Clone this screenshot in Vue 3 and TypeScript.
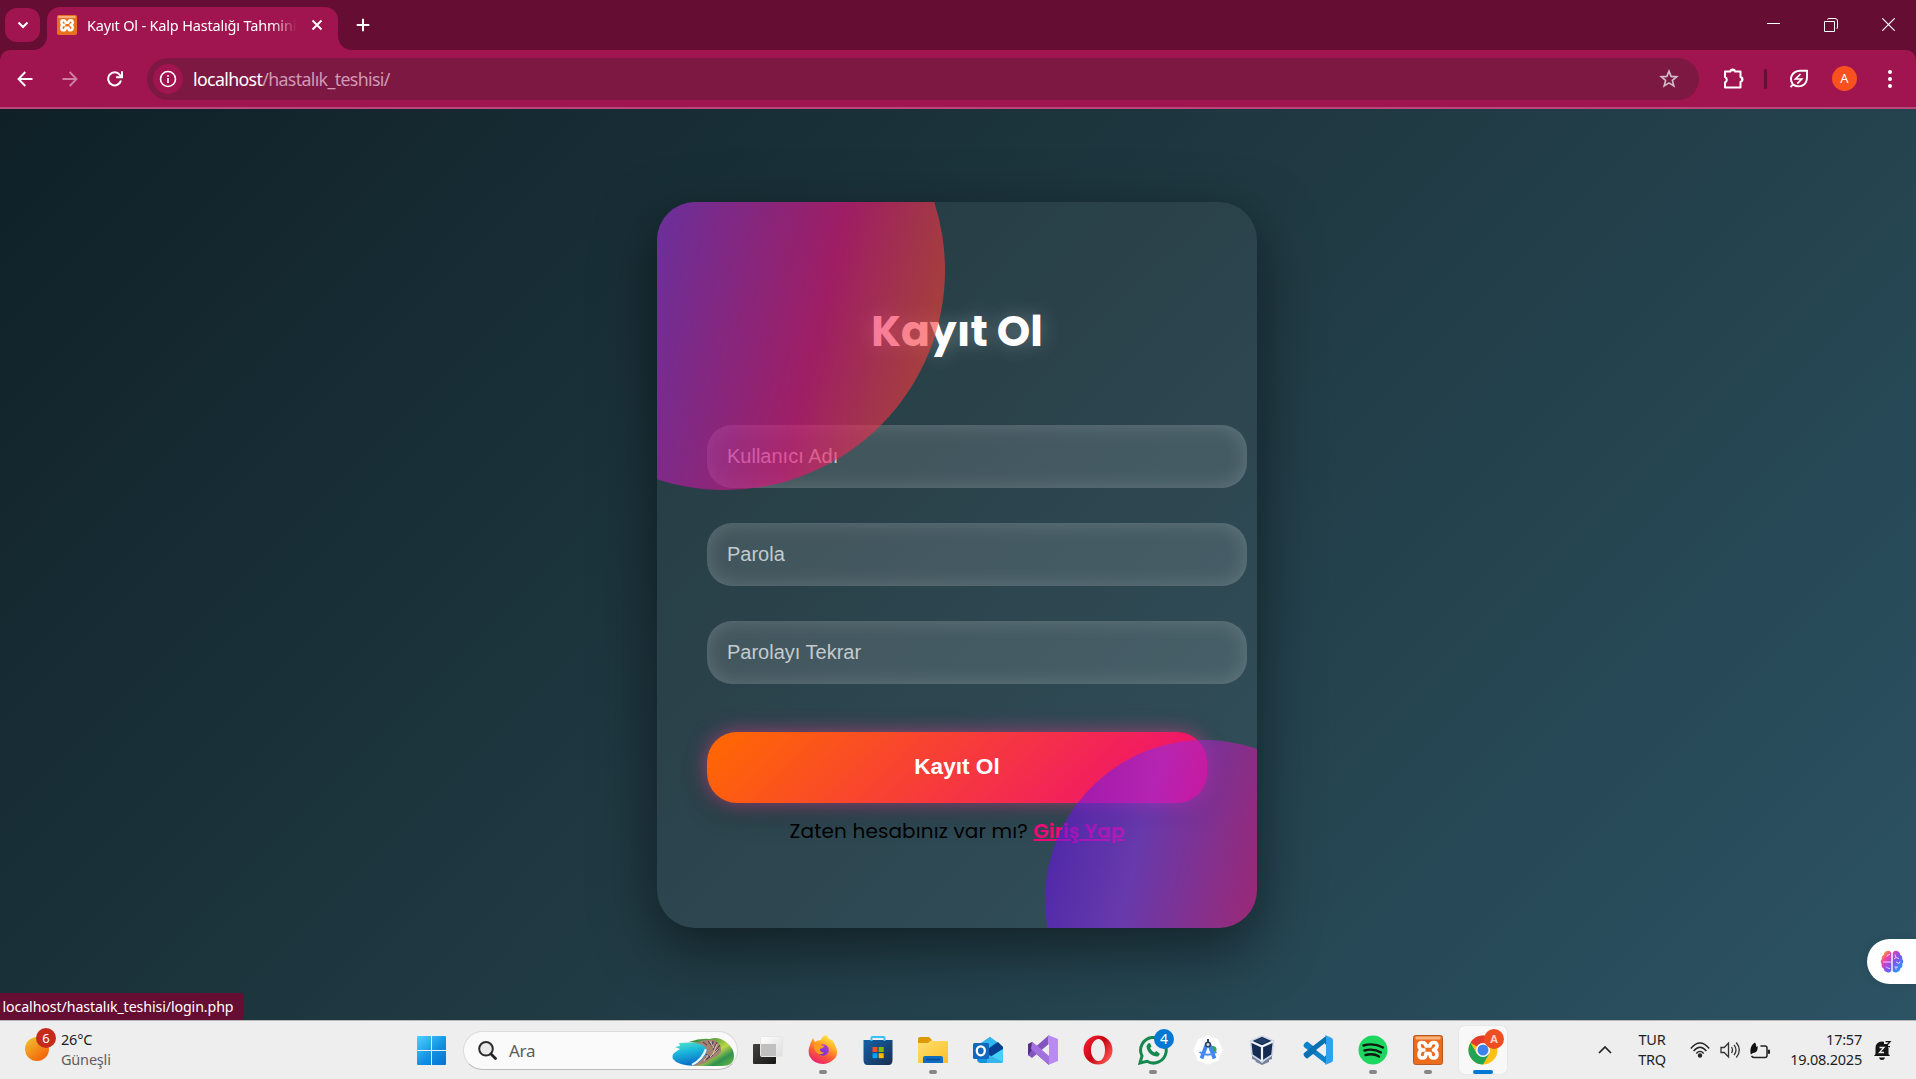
<script setup lang="ts">
const fields: string[] = ['Kullanıcı Adı', 'Parola', 'Parolayı Tekrar']
const steps = [0, 45, 90, 135, 180, 225, 270, 315]
</script>

<template>
  <div class="screen">
    <header class="tabs">
      <div class="tab-search">
        <svg width="12" height="8" viewBox="0 0 12 8"><path d="M1.5 1.5 6 6l4.500-4.500" fill="none" stroke="#fff" stroke-width="2" /></svg>
      </div>
      <div class="tab">
        <svg class="foot left" width="14" height="14"><path d="M14 0V14H0A14 14 0 0 0 14 0Z" fill="#a0154f" /></svg>
        <svg width="20" height="20" viewBox="0 0 30 30">
          <rect width="30" height="30" rx="2.500" fill="#e9701f" /><rect x="2" y="1.500" width="26" height="3" rx="1" fill="#f6b07c" />
          <path d="M9.500 15q-3-1-3-4t3-3q3 0 3.500 3.500h4q.5-3.500 3.500-3.500 3 0 3 3T20.500 15q3 1 3 4t-3 4q-3.500 0-3.500-4h-4q0 4-3.500 4-3 0-3-4t3-4h3" fill="none" stroke="#fff" stroke-width="3.800" stroke-linejoin="round" />
        </svg>
        <span class="tab-title">Kayıt Ol - Kalp Hastalığı Tahmini</span>
        <svg class="tab-x" width="12" height="12"><path d="m1.500 1.500 9 9m0-9-9 9" stroke="#fff" stroke-width="1.900" /></svg>
        <svg class="foot right" width="14" height="14"><path d="M0 0V14H14A14 14 0 0 1 0 0Z" fill="#a0154f" /></svg>
      </div>
      <svg class="plus" width="14" height="14"><path d="M7 .7v12.600M.7 7h12.600" stroke="#fff" stroke-width="2" /></svg>
      <div class="win">
        <svg width="13" height="13"><path d="M0 5.500h13" stroke="#fff" /></svg>
        <svg width="14" height="14" fill="none" stroke="#fff"><path d="M.5 3.500h10v10H.5zM3.500 1.500q0-1 1.500-1h6q2.500 0 2.500 2.500v6q0 1.500-1 2" /></svg>
        <svg width="13" height="13"><path d="m.3.300 12.400 12.400m0-12.400L.3 12.700" stroke="#fff" stroke-width="1.200" /></svg>
      </div>
    </header>

    <div class="toolbar-wrap">
      <div class="toolbar">
        <div class="nav">
          <svg width="16" height="16" fill="none" stroke="#fff" stroke-width="1.900"><path d="M15.500 8H2M8.300 1 1.500 8l6.800 7" /></svg>
          <svg width="16" height="16" fill="none" stroke="#cf7fa3" stroke-width="1.900"><path d="M.5 8H14M7.700 1l6.800 7-6.800 7" /></svg>
          <svg width="16" height="16" fill="none" stroke="#fff" stroke-width="2"><path d="M14 9.500A6.500 6.500 0 1 1 12.800 3.800L14.500 5.800M9 6.200h6V.300" /></svg>
        </div>
        <div class="omni">
          <div class="info">
            <svg width="18" height="18"><circle cx="9" cy="9" r="7.500" fill="none" stroke="#fff" stroke-width="1.600" /><path d="M9 8v5M9 5v1.800" stroke="#fff" stroke-width="1.600" /></svg>
          </div>
          <span class="url"><b>localhost</b>/hastalık_teshisi/</span>
          <svg class="star" width="20" height="20" viewBox="0 0 20 20"><path d="m10 2.200 2.100 5.200 5.600.4-4.300 3.600 1.400 5.500L10 13.900l-4.800 3 1.400-5.500-4.300-3.600 5.600-.4Z" fill="none" stroke="#d2bbc7" stroke-width="1.700" /></svg>
        </div>
        <svg class="puzzle" width="22" height="22" viewBox="0 0 22 22"><path d="M2 3.500h5.500a2.200 2 0 0 1 4.400 0h5.600v5.800a2 2.200 0 0 1 0 4.400v5.800H2v-5a3 3 0 0 0 0-5.500Z" fill="none" stroke="#fff" stroke-width="2" stroke-linejoin="round" /><path d="M7.500 3.200a2.200 2 0 0 1 4.400 0M18 9.300a2 2.200 0 0 1 0 4.400" fill="#fff" /></svg>
        <i class="divider"></i>
        <svg class="leaf" width="20" height="20" viewBox="0 0 20 20" fill="none" stroke="#fff" stroke-width="1.900"><path d="M1.500 18 4 15.600M4 15.600C-.5 9.500 3 2 11 1.700h7v6.500C18 16 11 19.800 4 15.600Z" /><path d="M11.500 5 6.500 10h6.200l-4.400 4.700" stroke-width="1.700" /></svg>
        <div class="avatar">A</div>
        <svg class="dots" width="4" height="18" fill="#fff"><circle cx="2" cy="2" r="2" /><circle cx="2" cy="9" r="2" /><circle cx="2" cy="16" r="2" /></svg>
      </div>
    </div>

    <main class="page">
      <section class="card">
        <h1>Kayıt Ol</h1>
        <form @submit.prevent>
          <input v-for="f in fields" :key="f" type="text" :placeholder="f" />
          <button type="submit">Kayıt Ol</button>
        </form>
        <p><span>Zaten hesabınız var mı?</span> <a href="#">Giriş Yap</a></p>
        <i class="orb one"></i>
        <i class="orb two"></i>
      </section>
      <div class="status">localhost/hastalık_teshisi/login.php</div>
      <div class="brain">
        <svg width="24" height="24" viewBox="0 0 24 24">
          <defs><linearGradient id="br" gradientUnits="userSpaceOnUse" x1="2" y1="2" x2="22" y2="20"><stop offset=".05" stop-color="#ffa11d" /><stop offset=".28" stop-color="#ed3fb0" /><stop offset=".58" stop-color="#7d52f2" /><stop offset="1" stop-color="#1da5ff" /></linearGradient></defs>
          <path d="M11.300 3v18q-2 2.500-4.700 1-2.600-.5-3-3.500-2.800-1.500-1.800-4.500-2.200-2.500 0-5-.6-3.200 2-4.300Q4.500 1 7.200 1q2.800-1 4.100 2ZM12.700 3v18q2 2.500 4.700 1 2.600-.5 3-3.500 2.800-1.500 1.800-4.500 2.200-2.500 0-5 .6-3.200-2-4.300Q19.500 1 16.800 1q-2.800-1-4.100 2Z" fill="url(#br)" />
          <path d="M3 12h8M7 6.500q0-2 3-2M6 16.500q1 2 4 2M15 4.500l1 3-2 1.500m2-1.500 3 1M16 12l3 1.500 1-2M14.500 17h3.500m-2 0v2.500" fill="none" stroke="#f6d9ff" stroke-width=".9" />
        </svg>
      </div>
    </main>

    <footer class="taskbar">
      <div class="weather">
        <div class="sun"><span>6</span></div>
        <div class="lines"><span class="temp">26°C</span><span class="cond">Güneşli</span></div>
      </div>
      <svg class="start" width="29" height="29" viewBox="0 0 29 29">
        <defs><linearGradient id="wn" gradientUnits="userSpaceOnUse" x1="0" y1="0" x2="26" y2="29"><stop stop-color="#4cd2ff" /><stop offset=".6" stop-color="#1290e0" /><stop offset="1" stop-color="#0575d5" /></linearGradient></defs>
        <path d="M1 0h13v14H0V1q0-1 1-1ZM15 0h13q1 0 1 1v13H15ZM0 15h14v14H1q-1 0-1-1ZM15 15h14v13q0 1-1 1H15Z" fill="url(#wn)" />
      </svg>
      <div class="search">
        <svg width="19" height="19"><circle cx="8" cy="7.800" r="6.800" fill="#e9e9e9" stroke="#2b2b2b" stroke-width="2" /><path d="m13 13 4.500 4.500" stroke="#222" stroke-width="2.800" stroke-linecap="round" /></svg>
        <span class="ara">Ara</span>
        <svg class="coast" width="62" height="30" viewBox="0 0 62 30">
          <defs>
            <linearGradient id="se" x1="0" y1="0" x2=".3" y2="1"><stop stop-color="#58e6ca" /><stop offset=".45" stop-color="#1cb8dc" /><stop offset="1" stop-color="#0b6fc7" /></linearGradient>
            <linearGradient id="ld" x1="0" y1="0" x2="1" y2="1"><stop stop-color="#247c38" /><stop offset=".35" stop-color="#6fae3f" /><stop offset=".55" stop-color="#c0d548" /><stop offset=".75" stop-color="#2f9150" /><stop offset="1" stop-color="#75bd45" /></linearGradient>
          </defs>
          <path d="M17 5Q28 1 38 2q8-3 16 3 8 6 8 14 0 10-12 10H22L34 7Z" fill="url(#ld)" />
          <path d="M7 6q10-1 22 0 7 2 7 8-2 9-14 15Q5 28 1 22-1 17 5 14l3-2-5-2 5-1Z" fill="url(#se)" />
          <path d="M34 12q-3 10-14 16" fill="none" stroke="#e4f6fb" stroke-width="2.500" />
          <path d="M23 6q10-4 20-3 7 5 6 12-4 5-10 7-6 6-18 7 12-7 14-15-1-7-12-8Z" fill="#a38473" />
          <path d="m36 4 3 4m2-4-1 6m5-5-4 8m7-5-6 8m5-4-7 6m1 0-8 5m1-6 4 3m-5 0 3 2M31 5l4 3" stroke="#4c344f" stroke-width="1" />
          <path d="m38 4 4 7m3-4-4 10m5-5-8 8m-2-2-4 6" stroke="#e8cfae" stroke-width=".9" />
        </svg>
      </div>
      <svg class="taskview" width="30" height="29">
        <defs><linearGradient id="tv" x1="0" y1="0" x2="1" y2="1"><stop stop-color="#44423f" /><stop offset="1" stop-color="#171717" /></linearGradient><linearGradient id="tl" x1="0" y1="0" x2="1" y2="1"><stop stop-color="#fff" /><stop offset="1" stop-color="#ddd" /></linearGradient></defs>
        <rect y="8" width="23" height="20" rx="1" fill="url(#tv)" /><rect x="7.500" y=".5" width="22" height="20" rx="1" fill="url(#tl)" stroke="#e6e6e6" /><path d="M8 8h15v12H8z" fill="#c0c0c0" />
      </svg>
      <div class="apps">
        <div class="app run">
          <svg viewBox="0 0 30 30">
            <defs><linearGradient id="ff" x1=".8" y1="0" x2=".3" y2="1"><stop stop-color="#fff44f" /><stop offset=".35" stop-color="#ffae24" /><stop offset=".65" stop-color="#ff5c38" /><stop offset="1" stop-color="#e91d71" /></linearGradient><linearGradient id="fp" x1="1" y1="0" x2="0" y2="1"><stop stop-color="#b833e1" /><stop offset="1" stop-color="#5a3bc9" /></linearGradient></defs>
            <path d="M3 7l2-4 2 4q3-2 6-2 1-4 5-5 2 2 3 4 4 0 6 6 5 10-2 15-8 7-18 2-8-5-6-14Z" fill="url(#ff)" />
            <circle cx="15" cy="15" r="5.800" fill="url(#fp)" /><path d="M7 8q4-1 6 2l4 1q-3 3-5 3 0 4 4 3-2 4-7 1-5-5-2-10Z" fill="#ff9a20" />
          </svg>
        </div>
        <div class="app">
          <svg viewBox="0 0 30 30">
            <defs><linearGradient id="st" x1="0" y1="0" x2="1" y2="1"><stop stop-color="#1462a9" /><stop offset="1" stop-color="#192e50" /></linearGradient></defs>
            <path d="M.5 5h29v20q0 5-4 5h-21q-4 0-4-5Z" fill="url(#st)" /><path d="M8.500 6V3q0-1 1-1h11q1 0 1 1v3" fill="none" stroke="#39c0f5" stroke-width="2" />
            <path d="M9.500 12h5v5h-5z" fill="#f25022" /><path d="M15.700 12h5v5h-5z" fill="#7fba00" /><path d="M9.500 18.200h5v5h-5z" fill="#00a4ef" /><path d="M15.700 18.200h5v5h-5z" fill="#ffb900" />
          </svg>
        </div>
        <div class="app run">
          <svg viewBox="0 0 30 30">
            <defs><linearGradient id="fo" x1="0" y1="0" x2="1" y2="1"><stop stop-color="#ffdf70" /><stop offset="1" stop-color="#fcbf27" /></linearGradient></defs>
            <path d="M0 4q0-2 2-2h9l3 3-3 4H0Z" fill="#dc9a08" /><path d="M0 8h9q2 0 3-2h17q1 0 1 1v21H1q-1 0-1-1Z" fill="url(#fo)" />
            <path d="M5 28v-5q0-2 2-2h16q2 0 2 2v5Z" fill="#106cc0" /><path d="M8 24.500h14" stroke="#064d8e" stroke-width="1.500" />
          </svg>
        </div>
        <div class="app">
          <svg viewBox="0 0 30 30">
            <path d="M4 11 17 2l13 10v13q0 3-3 3H8q-4 0-4-4Z" fill="#1493e0" /><path d="M8 8l9-6 7 5-11 8Z" fill="#32b6ef" /><path d="m15 14 10-7 5 5v2l-14 9Z" fill="#063f91" /><path d="M14 24 30 14v11q0 3-3 3H14Z" fill="#43d1f6" /><path d="m14 19 16 8q-1 1-3 1H14Z" fill="#35b5ec" />
            <rect y="8" width="16" height="16" rx="1.500" fill="#1168bd" /><ellipse cx="7.800" cy="15.800" rx="4" ry="4.500" fill="none" stroke="#fff" stroke-width="2.300" />
          </svg>
        </div>
        <div class="app">
          <svg viewBox="0 0 30 30">
            <path d="m0 9 4-2 17 14v9L4 15v7l-4-2Z" fill="#53307a" /><path d="m0 20 4 3L21 9V0L4 15Z" fill="#8354bd" /><path d="m20 0 10 4v22l-10 4Z" fill="#b98af0" /><path d="m4 7 17 13v10L3 14Z" fill="#a371df" /><path d="M21 9v12l-7-6Z" fill="#eee" />
          </svg>
        </div>
        <div class="app">
          <svg viewBox="0 0 30 30">
            <defs><linearGradient id="op" x1="0" y1="0" x2="1" y2=".7"><stop stop-color="#ff2235" /><stop offset=".55" stop-color="#c80713" /><stop offset="1" stop-color="#fb5553" /></linearGradient></defs>
            <path fill-rule="evenodd" d="M15 .5a14.500 14.500 0 1 0 0 29 14.500 14.500 0 0 0 0-29ZM15.500 4c4 0 6.500 5 6.500 11s-2.500 11-6.500 11S8 21 8 15s3.500-11 7.500-11Z" fill="url(#op)" />
          </svg>
        </div>
        <div class="app run">
          <svg viewBox="0 0 30 30">
            <path d="m2 28 2-7A12.800 12.800 0 1 1 9 26.300Z" fill="#f0f0f0" stroke="#15884f" stroke-width="3" /><path d="M10 8.500 8.500 11c0 6 6 11 11.500 10.500l2-2.500-3.500-3-2 1.500q-3-1.500-4.500-4.500l1.500-1.500L12 8Z" fill="#15884f" />
          </svg>
          <span class="badge">4</span>
        </div>
        <div class="app">
          <svg viewBox="0 0 30 30">
            <circle cx="15" cy="15" r="13.500" fill="#fff" /><circle v-for="a in steps" :key="a" cx="15" cy="4" r="3.500" fill="#fff" :transform="`rotate(${a} 15 15)`" />
            <circle cx="20" cy="14.500" r="3.500" fill="#35a852" /><path d="M13.800 9 8.500 23.500M16.200 9l5.300 14.500" stroke="#4285f4" stroke-width="3.800" /><path d="M6.500 17q8 5.500 17 0" fill="none" stroke="#4d8df7" stroke-width="2" /><circle cx="15" cy="9.500" r="2.300" fill="#ddd" stroke="#29415e" stroke-width="1.500" /><path d="M15 4v3" stroke="#29415e" stroke-width="2" />
          </svg>
        </div>
        <div class="app vbox">
          <svg viewBox="0 0 30 30">
            <path d="m5 19 10 9 10-9v5l-3 1v2l-7 3-6-3-1-2-3-1Z" fill="#77839f" /><path d="m3.500 6 11.500-5 11.500 5-1.500 14-10 6.500L5 20Z" fill="#162b52" stroke="#cad4e6" stroke-width="1.600" /><path d="m4 6.500 11 5 11-5M15 11v15" fill="none" stroke="#eef2fb" stroke-width="2.200" /><path d="m8 6 7-3 7 3-7 3Z" fill="#223d69" />
          </svg>
        </div>
        <div class="app">
          <svg viewBox="0 0 30 30">
            <path d="m1 9 2-2q1-1 2 0l18 14v8L1 12q-1-1 0-3Z" fill="#0d82ca" /><path d="m1 21 2 2q1 1 2 0L23 9V1L1 18q-1 1 0 3Z" fill="#0871b4" /><path d="m22 0 6 2.500q2 1 2 2.500v20q0 1.500-2 2.500L22 30q1-1 1-3V3q0-2-1-3Z" fill="#2ca3ef" /><path d="m22 8-9 7 9 7Z" fill="#eee" />
          </svg>
        </div>
        <div class="app run">
          <svg viewBox="0 0 30 30">
            <circle cx="15" cy="15" r="14.500" fill="#1ed760" /><path d="M5.500 10.500q10-3 19.500 2M6.500 15.500q9-2.500 16.500 2M7.500 20q8-2 13.500 1.500" fill="none" stroke="#10190f" stroke-width="2.400" stroke-linecap="round" />
          </svg>
        </div>
        <div class="app run">
          <svg viewBox="0 0 30 30">
            <rect x=".5" y=".5" width="29" height="29" rx="2" fill="#ec6c1c" stroke="#b75a22" /><rect x="2.500" y="1.500" width="25" height="3" rx="1" fill="#f7b17d" />
            <path d="M9.500 15q-3.500-1-3.500-4.500T9.500 7.500q3 0 3.500 3.500h4q.5-3.500 3.500-3.500 3.500 0 3.500 3T20.500 15q3.500 1 3.500 4.500t-3.500 3.500q-3.500 0-3.500-4.500h-4q0 4.500-3.500 4.500-3.500 0-3.500-3.500t3.500-4.500h3" fill="none" stroke="#fff" stroke-width="3.600" stroke-linejoin="round" />
          </svg>
        </div>
        <div class="app active">
          <svg viewBox="0 0 30 30">
            <circle cx="15" cy="15" r="14.500" fill="#fbc116" /><path d="M15 15 2.440 7.750A14.500 14.500 0 0 1 27.560 7.750H15Z" fill="#e33b2e" /><path d="M2.440 7.750A14.500 14.500 0 0 0 15 29.500L21.300 18.600 15 15 8.700 18.600Z" fill="#21a453" /><path d="M15 8.500h13" stroke="#e33b2e" stroke-width="2" /><circle cx="15" cy="15" r="7" fill="#fff" /><circle cx="15" cy="15" r="5.500" fill="#3e82ee" />
          </svg>
          <span class="badge user">A</span>
        </div>
      </div>
      <svg class="chev" width="14" height="8"><path d="m1 7 6-6 6 6" fill="none" stroke="#222" stroke-width="1.700" /></svg>
      <div class="lang"><span>TUR</span><span>TRQ</span></div>
      <div class="tray">
        <svg width="20" height="16" fill="none" stroke="#252525" stroke-width="1.400"><path d="M.8 6.500Q10-4.500 19.200 6.500M3.600 9q6.400-7.500 12.800 0M6.300 11.500q3.700-4.300 7.400 0" /><circle cx="10" cy="13.500" r="1.500" fill="#252525" /></svg>
        <svg width="20" height="18" fill="none" stroke="#333" stroke-width="1.300"><path d="M1 6.500h3.200L8.500 2v14l-4.300-4.500H1ZM11.500 6q2 3 0 6M14 3.800q4 5.200 0 10.400M16.300 1.500q6 7.500 0 15" /></svg>
        <svg width="20" height="17" fill="none" stroke="#222" stroke-width="1.500"><path d="M10.500 4H15q2 0 2 2v7.500q0 2-2 2H4.500q-2 0-3-1.500" /><path d="M17.800 8.500h1.500v2.500h-1.500" fill="#222" /><path d="M.8 12.500Q-1 4 5 .5q1.500 2 1 4.500L7.500 4q1 6.500-4.500 7Z" fill="#111" stroke="none" /></svg>
      </div>
      <div class="clock"><span>17:57</span><span>19.08.2025</span></div>
      <svg class="bell" width="18" height="20" viewBox="0 0 18 20"><path d="M1.500 14V8q0-6 6.500-6.500 6.500.5 6.500 6.500v6l1.500 2H0ZM5 17.500h6Q10.500 20 8 20t-3-2.500Z" fill="#151515" /><path d="M10 0h8v8h-4V4h-4Z" fill="#eee" /><path d="M11.500 1.700h4.500l-4.500 5H16" fill="none" stroke="#151515" stroke-width="1.300" /><path d="M5.500 7.500h4.500l-4.500 5H10" fill="none" stroke="#eee" stroke-width="1.300" /></svg>
    </footer>
  </div>
</template>

<style>
body { margin: 0; overflow: hidden; }
</style>

<style scoped>
* { box-sizing: border-box; }
svg { display: block; flex: none; }
.screen { width: 1916px; height: 1079px; display: flex; flex-direction: column; font-family: "Noto Sans", "Open Sans", sans-serif; }

.tabs { height: 50px; flex: none; background: #650d33; display: flex; align-items: center; padding-left: 5px; color: #fff; }
.tab-search { width: 35px; height: 34px; border-radius: 12px; background: #a0154f; display: flex; align-items: center; justify-content: center; }
.tab { position: relative; margin-left: 7px; width: 291px; height: 43px; align-self: flex-end; border-radius: 13px 13px 0 0; background: #a0154f; display: flex; align-items: center; padding: 0 0 7px 10px; }
.foot { position: absolute; bottom: 0; }
.foot.left { left: -14px; }
.foot.right { right: -14px; }
.tab-title { width: 210px; margin-left: 10px; overflow: hidden; white-space: nowrap; font-size: 14.500px; line-height: 20px; letter-spacing: -.18px; -webkit-mask-image: linear-gradient(90deg, #000 88%, transparent); mask-image: linear-gradient(90deg, #000 88%, transparent); }
.tab-x { margin-left: 14px; }
.plus { margin-left: 18px; }
.win { margin-left: auto; margin-right: 21px; display: flex; gap: 44px; }

.toolbar-wrap { height: 59px; flex: none; background: #650d33; }
.toolbar { height: 59px; background: #a0154f; border-bottom: 2px solid #b9477a; border-radius: 10px 10px 0 0; display: flex; align-items: center; padding-left: 17px; }
.nav { display: flex; gap: 29px; width: 130px; }
.omni { width: 1552px; height: 42px; border-radius: 21px; background: #7d1842; display: flex; align-items: center; padding: 0 20px 0 6px; }
.info { width: 30px; height: 30px; border-radius: 50%; background: #a0154f; display: flex; align-items: center; justify-content: center; }
.url { margin-left: 10px; font-size: 17.800px; line-height: 24px; letter-spacing: -.66px; color: #d09ab3; }
.url b { font-weight: 400; color: #fff; }
.star { margin-left: auto; }
.puzzle { margin-left: 24px; }
.divider { width: 3px; height: 20px; border-radius: 2px; background: #650d33; margin-left: 19px; }
.leaf { margin-left: 22px; }
.avatar { width: 25px; height: 25px; border-radius: 50%; background: #f8501e; color: #fff; font-size: 13px; line-height: 25px; text-align: center; margin-left: 23px; }
.dots { margin-left: 31px; }

.page { position: relative; height: 911px; flex: none; overflow: hidden; display: flex; align-items: center; justify-content: center; padding-right: 2px; background: linear-gradient(135deg, #0f2027, #203a43, #2c5364); }
.card { position: relative; width: 600px; height: 726px; border-radius: 38px; padding: 96px 50px 0; overflow: hidden; text-align: center; background: rgba(255, 255, 255, .055); box-shadow: 0 20px 60px rgba(0, 0, 0, .5); font-family: Poppins, Inter, sans-serif; }
h1 { margin: 0; height: 66px; font-size: 42.600px; line-height: 66px; font-weight: 700; color: #fff; text-shadow: 0 0 20px rgba(255, 255, 255, .3); }
form { margin-top: 61px; }
input { display: block; width: 540px; height: 63px; margin: 0 0 35px; padding: 0 20px; border: 0; border-radius: 25px; outline: 0; background: rgba(255, 255, 255, .115); box-shadow: inset 0 0 20px rgba(255, 255, 255, .17); font: 20px "Liberation Sans", sans-serif; color: #fff; }
input::placeholder { color: rgba(255, 255, 255, .7); opacity: 1; }
button { display: block; width: 500px; height: 71px; margin-top: 48px; border: 0; padding: 0; border-radius: 30px; background: linear-gradient(135deg, #ff6a00, #ee0979); box-shadow: 0 0 20px rgba(238, 70, 150, .6), 0 10px 30px rgba(0, 0, 0, .2); color: #fff; font: bold 22.600px "Liberation Sans", sans-serif; }
p { margin: 13px -20px 0; font-size: 20px; line-height: 30px; letter-spacing: .12px; white-space: nowrap; color: #000; }
a { color: #ee0979; font-weight: 600; text-decoration: underline; }
.orb { position: absolute; border-radius: 50%; opacity: .6; background: linear-gradient(45deg, #4a00e0, #8e2de2, #ee0979, #ff6a00); transform: rotate(58.500deg); }
.one { width: 440px; height: 440px; left: -152px; top: -152px; }
.two { width: 319px; height: 319px; left: 387.500px; top: 538px; }

.status { position: absolute; left: 0; bottom: 0; width: 244px; height: 27px; padding-left: 2.500px; border-radius: 0 4px 0 0; background: #650d33; color: #fff; font-size: 14.200px; line-height: 27px; letter-spacing: -.1px; white-space: nowrap; }
.brain { position: absolute; right: 0; top: 830px; width: 49px; height: 45px; border-radius: 23px 0 0 23px; background: #fff; display: flex; align-items: center; padding-left: 13px; box-shadow: 0 0 10px rgba(0, 0, 0, .12); }

.taskbar { height: 59px; flex: none; background: #eee; border-top: 1px solid #b9b9b9; display: flex; align-items: center; color: #1e1e1e; }
.weather { width: 417px; display: flex; padding-left: 25px; }
.sun { position: relative; width: 24px; height: 24px; margin-top: 7px; border-radius: 50%; background: linear-gradient(145deg, #f0bd2c 10%, #f56a0c 80%); }
.sun span { position: absolute; left: 11px; top: -9px; width: 20px; height: 20px; border-radius: 50%; background: #c42b1c; color: #fff; font-size: 13px; line-height: 20px; text-align: center; }
.lines { display: flex; flex-direction: column; margin: -1px 0 1px 12px; font-size: 14.500px; line-height: 20px; letter-spacing: -.2px; }
.cond { color: #5e5e5e; }
.search { width: 275px; height: 39px; margin-left: 17px; border: 1px solid #dcdcdc; border-bottom-color: #bdbdbd; border-radius: 20px; background: #fafafa; display: flex; align-items: center; padding-left: 14px; }
.ara { margin-left: 12px; font-size: 17px; letter-spacing: -.3px; color: #5c5c5c; }
.coast { margin: 4px 3px 0 auto; }
.taskview { margin-left: 15px; }
.apps { display: flex; gap: 7px; margin-left: 16px; }
.app { position: relative; width: 48px; height: 48px; border-radius: 5px; display: flex; align-items: center; justify-content: center; }
.app > svg { width: 30px; height: 30px; }
.vbox { padding-right: 3px; }
.run::after { content: ""; position: absolute; bottom: 0; left: 20px; width: 8px; height: 4px; border-radius: 2px; background: #868686; }
.active { background: #f8f8f8; box-shadow: 0 0 1px #bbb; }
.active::after { content: ""; position: absolute; bottom: 0; left: 14px; width: 20px; height: 4px; border-radius: 2px; background: #0078d4; }
.badge { position: absolute; right: 3px; top: 3px; width: 20px; height: 20px; border-radius: 50%; background: #0078d4; color: #fff; font-size: 14px; line-height: 20px; text-align: center; }
.badge.user { background: #ef4e20; color: #ffd3c5; font-size: 11px; font-weight: 700; }
.chev { margin-left: 91px; }
.lang { width: 40px; margin: -1px 0 1px 20px; display: flex; flex-direction: column; align-items: center; font-size: 14.500px; line-height: 20px; letter-spacing: -.3px; }
.tray { display: flex; align-items: center; gap: 10px; margin-left: 18px; }
.clock { width: 92px; margin-top: -3px; display: flex; flex-direction: column; align-items: flex-end; font-size: 14.500px; line-height: 20px; letter-spacing: -.23px; }
.bell { margin-left: 12px; }
</style>
